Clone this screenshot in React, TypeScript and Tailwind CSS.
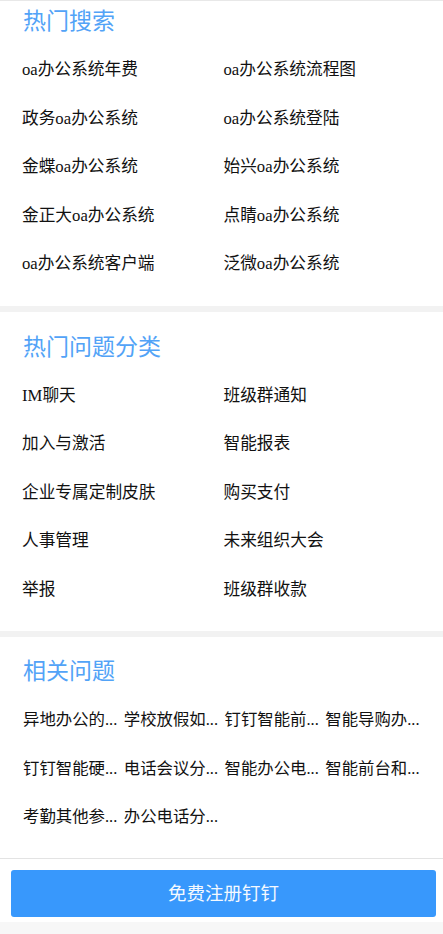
import React from "react";

const hotSearch = [
  "oa办公系统年费",
  "oa办公系统流程图",
  "政务oa办公系统",
  "oa办公系统登陆",
  "金蝶oa办公系统",
  "始兴oa办公系统",
  "金正大oa办公系统",
  "点睛oa办公系统",
  "oa办公系统客户端",
  "泛微oa办公系统",
];

const hotCategory = [
  "IM聊天",
  "班级群通知",
  "加入与激活",
  "智能报表",
  "企业专属定制皮肤",
  "购买支付",
  "人事管理",
  "未来组织大会",
  "举报",
  "班级群收款",
];

// 已截断的标题，和页面上显示的一致
const related = [
  "异地办公的...",
  "学校放假如...",
  "钉钉智能前...",
  "智能导购办...",
  "钉钉智能硬...",
  "电话会议分...",
  "智能办公电...",
  "智能前台和...",
  "考勤其他参...",
  "办公电话分...",
];

const font = "font-['Liberation_Serif','Noto_Sans_CJK_SC',serif]";

function Heading({ children, first }: { children: React.ReactNode; first?: boolean }) {
  return (
    <h2
      className={`h-[44px] text-[23px] leading-[44px] text-[#52a3f7] ${first ? "-mt-px" : ""}`}
    >
      {children}
    </h2>
  );
}

export default function App() {
  return (
    <div className={`min-h-screen bg-[#f7f7f7] text-[#111] ${font}`}>
      {/* 热门搜索 */}
      <section className="border-t border-[#e8e8e8] bg-white pl-[22px] pr-[18px] pb-[17px]">
        <div className="pl-px">
          <Heading first>热门搜索</Heading>
        </div>
        <div className="mt-[2px] grid grid-cols-2">
          {hotSearch.map((t) => (
            <div key={t} className="h-[48.5px] text-[16.7px] leading-[48.5px]">
              {t}
            </div>
          ))}
        </div>
      </section>

      <div className="h-[6px] bg-[#f2f2f2]" />

      {/* 热门问题分类 */}
      <section className="bg-white pl-[22px] pr-[18px] pt-[14px] pb-[17px]">
        <div className="pl-px">
          <Heading>热门问题分类</Heading>
        </div>
        <div className="mt-[2px] grid grid-cols-2">
          {hotCategory.map((t) => (
            <div key={t} className="h-[48.5px] text-[16.7px] leading-[48.5px]">
              {t}
            </div>
          ))}
        </div>
      </section>

      <div className="h-[6px] bg-[#f2f2f2]" />

      {/* 相关问题 */}
      <section className="bg-white pl-[23px] pr-[17px] pt-[13px] pb-[16px]">
        <Heading>相关问题</Heading>
        <div className="mt-[2px] grid grid-cols-4">
          {related.map((t) => (
            <div
              key={t}
              className="h-[48.5px] whitespace-nowrap text-[16.4px] leading-[48.5px]"
            >
              {t}
            </div>
          ))}
        </div>
      </section>

      {/* 底部按钮 */}
      <div className="border-t border-[#e3e3e3] bg-white pl-[11px] pr-[7px] pt-[11px] pb-[5px]">
        <button className="flex h-[47px] w-full items-center justify-center rounded-[3px] bg-[#3898fc] text-[18.5px] text-[#f4f9ff] font-['Noto_Sans_CJK_SC',sans-serif]">
          免费注册钉钉
        </button>
      </div>
    </div>
  );
}
